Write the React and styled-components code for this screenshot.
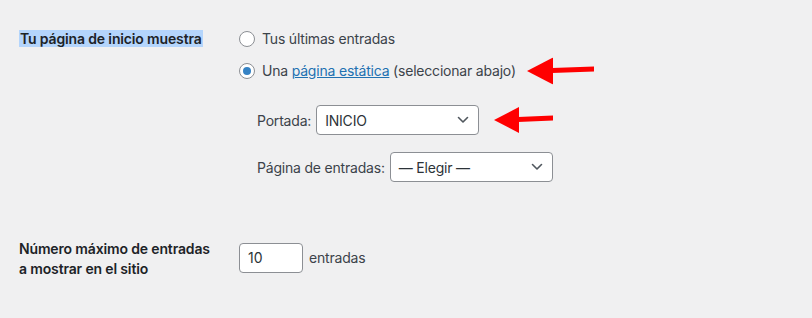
import React from "react";
import styled, { createGlobalStyle } from "styled-components";

const GlobalStyle = createGlobalStyle`
  html, body {
    margin: 0;
    padding: 0;
    background: #f0f0f1;
  }
  body {
    font-family: Inter, "Noto Sans", sans-serif;
    font-size: 14px;
    letter-spacing: -0.2px;
    color: #3c434a;
  }
`;

function Arrow({ width = 68, height = 28 }) {
  const head = Math.round(height * 0.98);
  const mid = height / 2;
  return (
    <svg width={width} height={height} viewBox={`0 0 ${width} ${height}`}>
      <polygon points={`0,${mid} ${head},0 ${head},${height}`} fill="#ff0000" />
      <polygon
        points={`${head - 1},${mid - 3} ${width},${mid - 4.5} ${width},${mid + 0.5} ${head - 1},${mid + 2}`}
        fill="#ff0000"
      />
    </svg>
  );
}

function Chevron() {
  return (
    <svg width="12" height="8" viewBox="0 0 12 8">
      <polyline
        points="1.5,1.5 6,6 10.5,1.5"
        fill="none"
        stroke="#50575e"
        strokeWidth="1.6"
        strokeLinecap="round"
        strokeLinejoin="round"
      />
    </svg>
  );
}

function App() {
  return (
    <>
      <GlobalStyle />
      <Page>
        <FormTable>
          <RowLabel>
            <Selected>Tu página de inicio muestra</Selected>
          </RowLabel>
          <Fieldset>
            <RadioList>
              <RadioRow>
                <Radio />
                <span>Tus últimas entradas</span>
              </RadioRow>
              <RadioRow>
                <Radio checked />
                <Annotated>
                  <span>
                    Una <Link href="#">página estática</Link> (seleccionar abajo)
                  </span>
                  <ArrowSpot $gap={11}>
                    <Arrow width={67} height={27} />
                  </ArrowSpot>
                </Annotated>
              </RadioRow>
            </RadioList>
            <SubFields>
              <FieldRow>
                <span>Portada:</span>
                <Annotated>
                  <SelectBox $width={163}>
                    <span>INICIO</span>
                    <Chevron />
                  </SelectBox>
                  <ArrowSpot $gap={15}>
                    <Arrow width={59} height={26} />
                  </ArrowSpot>
                </Annotated>
              </FieldRow>
              <FieldRow>
                <span>Página de entradas:</span>
                <SelectBox $width={163}>
                  <span>— Elegir —</span>
                  <Chevron />
                </SelectBox>
              </FieldRow>
            </SubFields>
          </Fieldset>

          <RowLabel>
            Número máximo de entradas
            <br />
            a mostrar en el sitio
          </RowLabel>
          <NumberCell>
            <NumberInput type="number" defaultValue="10" readOnly />
            <span>entradas</span>
          </NumberCell>
        </FormTable>
      </Page>
    </>
  );
}

const Page = styled.div`
  width: 812px;
  height: 318px;
  box-sizing: border-box;
  padding: 29px 0 0 19px;
  overflow: hidden;
`;

const FormTable = styled.div`
  display: grid;
  grid-template-columns: 220px 1fr;
  row-gap: 57px;
`;

const RowLabel = styled.div`
  font-weight: 600;
  letter-spacing: -0.15px;
  color: #1d2327;
  line-height: 20px;
`;

const Selected = styled.span`
  background: #b4d5fc;
  padding: 0 1px;
`;

const Fieldset = styled.div`
  display: flex;
  flex-direction: column;
`;

const RadioList = styled.div`
  display: flex;
  flex-direction: column;
  gap: 12px;
`;

const RadioRow = styled.label`
  display: flex;
  align-items: center;
  gap: 7px;
  height: 20px;
  line-height: 20px;
`;

const Radio = styled.span`
  box-sizing: border-box;
  width: 16px;
  height: 16px;
  border-radius: 50%;
  border: 1px solid #8c8f94;
  background: #fff;
  display: inline-flex;
  align-items: center;
  justify-content: center;

  &::after {
    content: "";
    width: 8px;
    height: 8px;
    border-radius: 50%;
    background: #3582c4;
    display: ${(p) => (p.checked ? "block" : "none")};
  }
`;

const Annotated = styled.span`
  position: relative;
  display: inline-flex;
  align-items: center;
`;

const ArrowSpot = styled.span`
  position: absolute;
  left: calc(100% + ${(p) => p.$gap}px);
  top: 50%;
  transform: translateY(-50%);
  display: flex;
`;

const Link = styled.a`
  color: #2271b1;
  text-decoration: underline;
`;

const SubFields = styled.div`
  display: flex;
  flex-direction: column;
  gap: 17px;
  margin-top: 24px;
  padding-left: 18px;
`;

const FieldRow = styled.div`
  display: flex;
  align-items: center;
  gap: 5px;
`;

const SelectBox = styled.div`
  box-sizing: border-box;
  width: ${(p) => p.$width}px;
  height: 30px;
  padding: 0 9px 0 8px;
  display: flex;
  align-items: center;
  justify-content: space-between;
  background: #fff;
  border: 1px solid #8c8f94;
  border-radius: 4px;
  color: #2c3338;
`;

const NumberCell = styled.div`
  display: flex;
  align-items: flex-start;
  gap: 6px;
  line-height: 30px;
  padding-top: 4px;
`;

const NumberInput = styled.input`
  box-sizing: border-box;
  width: 64px;
  height: 30px;
  padding: 0 8px;
  border: 1px solid #8c8f94;
  border-radius: 4px;
  background: #fff;
  font: inherit;
  color: #2c3338;
  outline: none;
  -moz-appearance: textfield;

  &::-webkit-outer-spin-button,
  &::-webkit-inner-spin-button {
    -webkit-appearance: none;
    margin: 0;
  }
`;

export default App;
